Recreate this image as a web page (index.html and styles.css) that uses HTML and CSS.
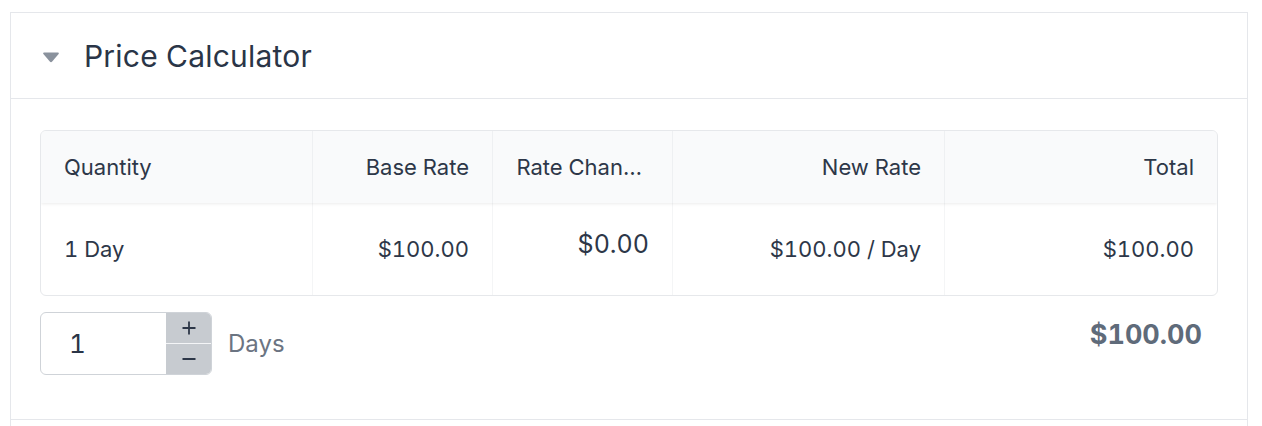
FILE: index.html
```html
<!DOCTYPE html>
<html>
<head>
<meta charset="utf-8">
<link rel="stylesheet" href="styles.css">
</head>
<body>
<div class="card">
  <div class="card-header">
    <svg class="caret" width="18" height="12" viewBox="0 0 18 12"><path d="M2 1.5 H16 Q17.6 1.5 16.6 3 L10.2 10.6 Q9 11.8 7.8 10.6 L1.4 3 Q0.4 1.5 2 1.5 Z" fill="#8a929d"/></svg>
    <h2 class="title">Price Calculator</h2>
  </div>
  <div class="card-body">
    <div class="table">
      <div class="row head">
        <div class="cell left">Quantity</div>
        <div class="cell">Base Rate</div>
        <div class="cell truncated">Rate Chan…</div>
        <div class="cell">New Rate</div>
        <div class="cell">Total</div>
      </div>
      <div class="row body">
        <div class="cell left">1 Day</div>
        <div class="cell">$100.00</div>
        <div class="cell big">$0.00</div>
        <div class="cell">$100.00 / Day</div>
        <div class="cell">$100.00</div>
      </div>
    </div>
    <div class="controls">
      <div class="qty">
        <div class="qty-value">1</div>
        <div class="stepper">
          <div class="step"><svg width="14" height="14" viewBox="0 0 14 14"><path d="M7 0.5V13.5M0.5 7H13.5" stroke="#2d3748" stroke-width="1.8"/></svg></div>
          <div class="step"><svg width="14" height="14" viewBox="0 0 14 14"><path d="M0.5 7H13.5" stroke="#2d3748" stroke-width="1.8"/></svg></div>
        </div>
      </div>
      <span class="unit">Days</span>
      <span class="grand">$100.00</span>
    </div>
  </div>
  <div class="card-next"></div>
</div>
</body>
</html>
```
FILE: styles.css
```css
html, body { margin: 0; padding: 0; background: #fff; }
body {
  font-family: Inter, "Noto Sans", "Liberation Sans", sans-serif;
  font-variant-numeric: tabular-nums;
  color: #2d3748;
  padding: 12px 14px 0 10px;
}
.card {
  border: 1px solid #e5e7eb;
  border-bottom: none;
}
.card-header {
  height: 85px;
  display: flex;
  align-items: center;
  padding-left: 31px;
  border-bottom: 1px solid #e5e7eb;
}
.caret { margin-top: 2px; }
.title {
  margin: 0 0 0 24px;
  font-size: 30px;
  font-weight: 400;
  letter-spacing: 0.2px;
  color: #2a3547;
}
.card-body {
  padding: 31px 29px 44px 29px;
  border-bottom: 1px solid #e5e7eb;
}
.table {
  border: 1px solid #e6e8eb;
  border-radius: 6px;
  overflow: hidden;
}
.row {
  display: grid;
  grid-template-columns: 271px 180px 180px 272px 1fr;
}
.row.head {
  height: 72px;
  background: #f9fafb;
  box-shadow: 0 1px 3px rgba(0,0,0,0.08);
  position: relative;
}
.row.body { height: 92px; }
.cell {
  display: flex;
  align-items: center;
  justify-content: flex-end;
  padding: 0 23px;
  font-size: 22px;
  border-left: 1px solid #eef0f2;
  white-space: nowrap;
}
.row.body .cell { border-left-color: #f4f5f6; }
.cell.left { justify-content: flex-start; border-left: none; }
.cell.truncated { padding-right: 30px; }
.cell.big { font-size: 25px; padding-bottom: 10px; }
.controls {
  display: flex;
  align-items: center;
  margin-top: 16px;
  padding-right: 16px;
}
.qty {
  width: 170px;
  height: 61px;
  border: 1px solid #cfd3d8;
  border-radius: 6px;
  display: flex;
  overflow: hidden;
}
.qty-value {
  flex: 1;
  display: flex;
  align-items: center;
  padding-left: 28px;
  font-size: 26px;
  color: #2a3547;
}
.stepper {
  width: 45px;
  display: flex;
  flex-direction: column;
  background: #c7cbd0;
}
.step {
  flex: 1;
  display: flex;
  align-items: center;
  justify-content: center;
}
.step + .step { border-top: 1.5px solid #f4f5f7; }
.unit {
  margin-left: 16px;
  font-size: 24px;
  color: #6b7482;
}
.grand {
  margin-left: auto;
  font-size: 27px;
  font-weight: 700;
  color: #5f6b7a;
  margin-top: -18px;
}
.card-next { height: 10px; }
```
